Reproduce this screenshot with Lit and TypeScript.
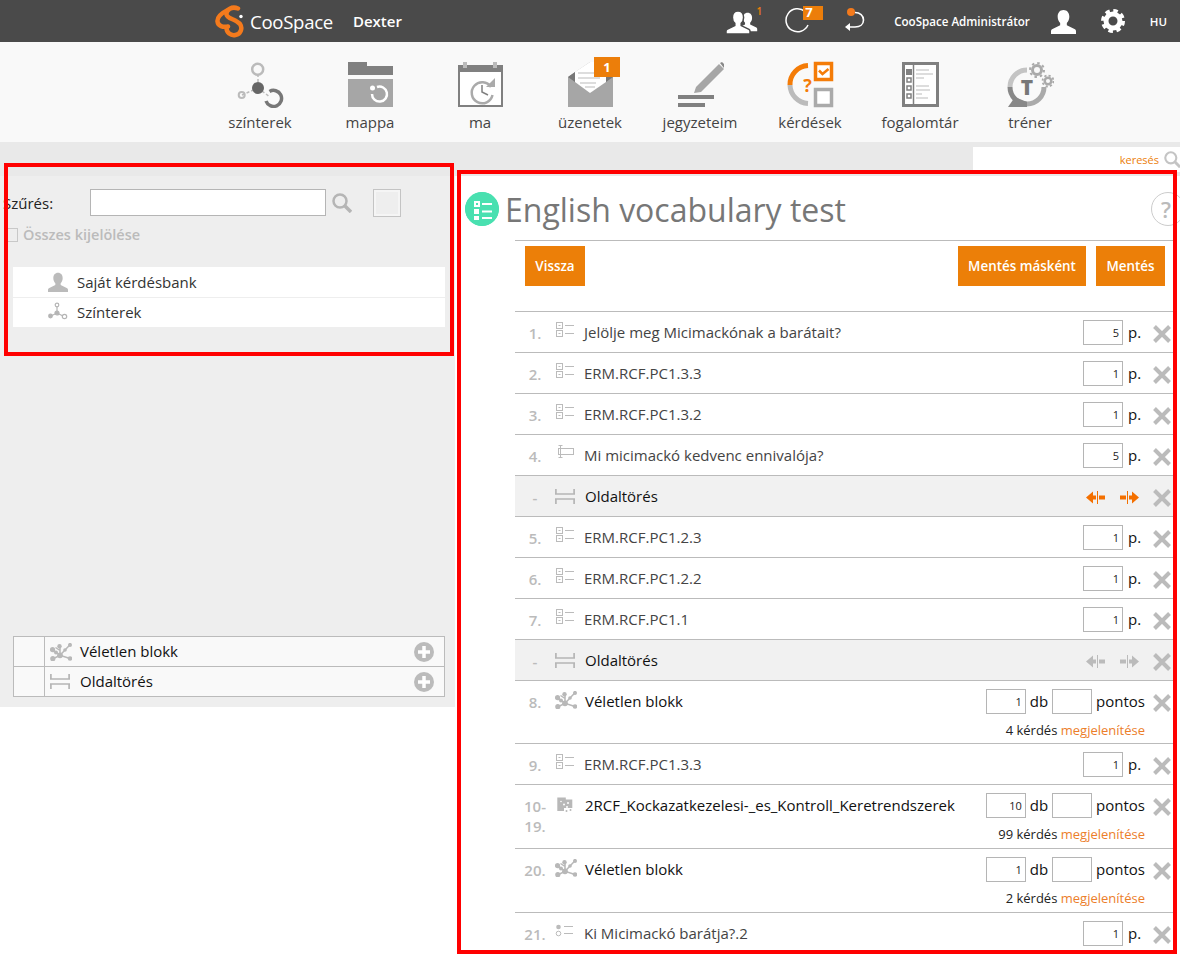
import { LitElement, html, css, svg } from 'lit';
import { customElement } from 'lit/decorators.js';

type Row = {
  no: string;
  kind: 'check' | 'text' | 'radio' | 'random' | 'folder' | 'break';
  title: string;
  points?: string;
  count?: string;
  note?: string;
  active?: boolean;
  short?: boolean;
};

const ROWS: Row[] = [
  { no: '1.', kind: 'check', title: 'Jelölje meg Micimackónak a barátait?', points: '5' },
  { no: '2.', kind: 'check', title: 'ERM.RCF.PC1.3.3', points: '1' },
  { no: '3.', kind: 'check', title: 'ERM.RCF.PC1.3.2', points: '1' },
  { no: '4.', kind: 'text', title: 'Mi micimackó kedvenc ennivalója?', points: '5' },
  { no: '-', kind: 'break', title: 'Oldaltörés', active: true },
  { no: '5.', kind: 'check', title: 'ERM.RCF.PC1.2.3', points: '1' },
  { no: '6.', kind: 'check', title: 'ERM.RCF.PC1.2.2', points: '1' },
  { no: '7.', kind: 'check', title: 'ERM.RCF.PC1.1', points: '1' },
  { no: '-', kind: 'break', title: 'Oldaltörés' },
  { no: '8.', kind: 'random', title: 'Véletlen blokk', count: '1', note: '4 kérdés', short: true },
  { no: '9.', kind: 'check', title: 'ERM.RCF.PC1.3.3', points: '1' },
  { no: '10-19.', kind: 'folder', title: '2RCF_Kockazatkezelesi-_es_Kontroll_Keretrendszerek', count: '10', note: '99 kérdés' },
  { no: '20.', kind: 'random', title: 'Véletlen blokk', count: '1', note: '2 kérdés' },
  { no: '21.', kind: 'radio', title: 'Ki Micimackó barátja?.2', points: '1' },
];

const PERSON = 'M12 1c-3.600 0-5.600 2.800-5.600 6.400 0 2.400 1 4.600 2.400 6v2.200L1 19.400C.3 19.800 0 20.500 0 21.300V24h24v-2.700c0-.8-.3-1.500-1-1.900l-7.800-3.800v-2.200c1.400-1.400 2.400-3.600 2.400-6C17.600 3.800 15.600 1 12 1z';

const iconCheck = html`<svg width="20" height="18" viewBox="0 0 20 18" fill="none" stroke="#bbb">
  <rect x="1.500" y="1.500" width="6" height="6"/><rect x="1.500" y="9.500" width="6" height="6"/>
  <path d="M3.500 4.500h2M3.500 12.500h2M10 4.500h9M10 12.500h9"/>
</svg>`;

const iconText = html`<svg width="20" height="18" viewBox="0 0 20 18" fill="none" stroke="#bbb">
  <rect x="3.500" y="4.500" width="15" height="6"/><path d="M5.500 1.500v12M3.500 1.500h4M3.500 13.500h4"/>
</svg>`;

const iconRadio = html`<svg width="20" height="18" viewBox="0 0 20 18" fill="none">
  <circle cx="3.500" cy="5" r="2.300" fill="#bbb"/><circle cx="3.500" cy="11.500" r="2.300" stroke="#bbb"/>
  <path d="M9 4.500h9M9 11.500h9" stroke="#bbb"/>
</svg>`;

const iconRandom = html`<svg class="random" width="22" height="18" viewBox="0 0 22 18" fill="#b8b8b8">
  <path d="M2.500 6.700L10 12.300 20 1.800M2.500 16L10 12.300 20 15.500M10 3v9M5.500 4.500l4.500 3" fill="none" stroke="#b8b8b8" stroke-width="1.500"/>
  <circle cx="2.500" cy="6.700" r="2.600"/><circle cx="2.800" cy="15.700" r="2.600"/><circle cx="6" cy="9.500" r="2"/>
  <circle cx="9.500" cy="3.200" r="2.200"/><circle cx="10" cy="12.300" r="2.900"/><circle cx="15" cy="7" r="1.800"/>
  <circle cx="20" cy="1.900" r="2"/><circle cx="20" cy="15.500" r="2.300"/>
</svg>`;

const iconFolder = html`<svg width="20" height="18" viewBox="0 -2.500 20 18">
  <path fill="#b8b8b8" d="M2.300 0h8.500v2h6.500v8.500H9v3H2.300z"/>
  <g fill="#b8b8b8"><circle cx="8" cy="12.500" r="1"/><circle cx="11.500" cy="13.500" r="1"/><circle cx="15.500" cy="12.500" r="1"/></g>
  <g fill="#fff"><circle cx="9" cy="7" r="1"/><circle cx="13" cy="5.500" r="1"/><circle cx="12" cy="9.500" r="1"/><circle cx="6" cy="4" r=".8"/></g>
</svg>`;

const iconBreak = html`<svg width="20" height="15" viewBox="0 0 20 15" fill="none" stroke="#b5b5b5" stroke-width="1.700">
  <path d="M.9 0v5M19.100 0v5M.9 10v5M19.100 10v5M0 5h20M0 10h20"/>
</svg>`;

const kindIcon = { check: iconCheck, text: iconText, radio: iconRadio, random: iconRandom, folder: iconFolder, break: iconBreak };

const iconCross = html`<svg class="cross" width="18" height="18" viewBox="0 0 18 18">
  <path d="M1.500 1.500l15 15M16.500 1.500l-15 15" stroke="#bbb" stroke-width="4" fill="none"/>
</svg>`;

const arrowLeft = (c: string) => html`<svg width="19" height="13" viewBox="0 0 19 13" fill=${c}>
  <path d="M0 6.500l7-6V4.500h3v4H7v4z"/><rect x="11" y="0" width="1" height="13"/><rect x="13" y="4.500" width="6" height="4"/>
</svg>`;

const arrowRight = (c: string) => html`<svg width="19" height="13" viewBox="0 0 19 13" fill=${c}>
  <rect x="0" y="4.500" width="6" height="4"/><rect x="7" y="0" width="1" height="13"/><path d="M19 6.500l-7-6V4.500H9v4h3v4z"/>
</svg>`;

const iconPlus = html`<svg width="20" height="20" viewBox="0 0 20 20">
  <circle cx="10" cy="10" r="10" fill="#bbb"/><path d="M10 4v12M4 10h12" stroke="#fff" stroke-width="3.500"/>
</svg>`;

const iconLens = (c: string, w: number) => html`<svg width=${w} height=${w} viewBox="0 0 20 20" fill="none" stroke=${c}>
  <circle cx="8" cy="8" r="6.500" stroke-width="2.500"/><path d="M13 13l6 6" stroke-width="3.500"/>
</svg>`;

const personShape = (fill: string) => svg`<path fill=${fill} d=${PERSON}/>`;

@customElement('app-root')
export class AppRoot extends LitElement {
  static styles = css`
    :host {
      display: block;
      position: relative;
      width: 1180px;
      height: 957px;
      overflow: hidden;
      background: #fff;
      font-family: 'Open Sans', 'Liberation Sans', sans-serif;
      font-size: 15px;
      color: #444;
    }
    svg { display: block; flex: none; }

    .top {
      display: flex;
      align-items: center;
      height: 42px;
      padding-left: 215px;
      background: #4a4a4a;
      color: #fff;
    }
    .brand { font-size: 18.600px; margin-left: 5px; letter-spacing: -0.300px; }
    .space { font-size: 15px; font-weight: 600; margin-left: 20px; }
    .tools { display: flex; align-items: center; margin-left: auto; height: 42px; }
    .tool { position: relative; }
    .users { margin-right: 23px; width: 36px; height: 30px; }
    .sup { position: absolute; top: -1px; right: 0; font-size: 10px; font-weight: 600; color: #ec7e0a; line-height: 12px; }
    .reload { width: 38px; height: 32px; margin-right: 22px; }
    .mini-badge {
      position: absolute;
      top: 1px;
      left: 18px;
      width: 20px;
      height: 14px;
      padding-left: 2px;
      box-sizing: border-box;
      background: #ec7e0a;
      font-size: 13px;
      font-weight: 700;
      line-height: 13px;
    }
    .admin { font-size: 11.600px; font-weight: 600; margin-left: 29px; }
    .lang { font-size: 11.500px; font-weight: 600; margin: 0 13px 0 25px; }

    .nav {
      display: flex;
      height: 100px;
      padding-left: 205px;
      box-sizing: border-box;
      background: #f9f9f9;
    }
    .nav-item {
      position: relative;
      display: flex;
      flex-direction: column;
      align-items: center;
      width: 110px;
      padding-top: 18px;
      font-size: 15px;
      line-height: 20px;
    }
    .nav-item span.label { margin-top: 4px; }
    .badge {
      position: absolute;
      top: 15px;
      left: 59px;
      width: 26px;
      height: 20px;
      background: #ec7e0a;
      color: #fff;
      font-size: 13px;
      font-weight: 700;
      line-height: 20px;
      text-align: center;
    }

    .strip {
      display: flex;
      justify-content: flex-end;
      height: 34px;
      background: #e9e9e9;
    }
    .search {
      display: flex;
      align-items: center;
      justify-content: flex-end;
      gap: 5px;
      width: 207px;
      height: 25px;
      margin-top: 5px;
      background: #fff;
      color: #ec7e0a;
      font-size: 11px;
    }
    .search svg { margin-right: -1px; }

    .body { display: flex; align-items: flex-start; }
    .side {
      display: flex;
      flex-direction: column;
      width: 455px;
      height: 531px;
      padding: 13px 0 10px;
      box-sizing: border-box;
      background: #eee;
      color: #333;
    }
    .filter { display: flex; align-items: flex-start; height: 28px; padding-left: 3px; color: #222; line-height: 28px; }
    .filter-label { width: 87px; }
    .filter input { width: 236px; height: 27px; box-sizing: border-box; border: 1px solid #b5b5b5; background: #fff; padding: 0; }
    .filter svg { margin: 4px 0 0 6px; }
    .square { width: 28px; height: 28px; margin-left: 21px; box-sizing: border-box; border: 1px solid #c4c4c4; outline: 2px solid #f5f5f5; outline-offset: -3px; }
    .all { display: flex; align-items: center; gap: 5px; height: 14px; margin: 11px 0 25px 4px; color: #bbb; font-weight: 600; font-size: 14.500px; }
    .all-text { margin-top: -2px; }
    .box { width: 14px; height: 14px; box-sizing: border-box; border: 1px solid #c8c8c8; }
    .tree { margin-left: 13px; width: 432px; background: #fff; }
    .tree-row { display: flex; align-items: center; height: 30px; box-sizing: border-box; padding-left: 35px; }
    .tree-row + .tree-row { border-top: 1px solid #eee; padding-bottom: 1px; }
    .tree-row span { margin-left: 9px; }
    .blocks {
      margin: auto 0 0 13px;
      width: 432px;
      box-sizing: border-box;
      border: 1px solid #bbb;
      background: #f9f9f9;
      color: #111;
    }
    .block { display: flex; align-items: center; height: 29px; }
    .block + .block { border-top: 1px solid #bbb; }
    .block-gap { width: 30px; height: 100%; border-right: 1px solid #bbb; margin-right: 5px; }
    .block-name { margin: 0 0 2px 10px; }
    .block .random + .block-name { margin-left: 8px; }
    .block svg:last-child { margin: 0 10px 0 auto; }

    .main { width: 725px; }
    .head { display: flex; align-items: center; height: 34px; padding: 16px 0 14px 10px; }
    .round { width: 34px; height: 34px; border-radius: 50%; background: #49e0b0; }
    .head h1 { margin: 2px 0 0 6px; font-size: 32px; font-weight: 400; color: #777; line-height: 34px; }
    .help {
      width: 32px;
      height: 32px;
      margin: 0 -5px 0 auto;
      border: 1px solid #ccc;
      border-radius: 50%;
      color: #bbb;
      font-size: 22px;
      font-weight: 600;
      line-height: 32px;
      text-align: center;
      text-indent: -4px;
    }
    .content { margin-left: 60px; width: 660px; }
    .toolbar {
      display: flex;
      gap: 10px;
      padding: 5px 10px 25px;
      border-top: 1px solid #bbb;
    }
    .btn {
      height: 40px;
      background: #ec7f08;
      color: #fff;
      font-size: 13.400px;
      font-weight: 600;
      line-height: 40px;
      text-align: center;
    }
    .btn.back { width: 60px; margin-right: auto; }
    .btn.save-as { width: 128px; }
    .btn.save { width: 69px; }

    .row {
      display: flex;
      align-items: flex-start;
      height: 41px;
      box-sizing: border-box;
      padding: 8px 4px 0 0;
      border-top: 1px solid #bbb;
    }
    .row.tall { height: 64px; }
    .row.short { height: 63px; }
    .row.break { background: #f1f1f1; }
    .no {
      flex: none;
      width: 30px;
      padding: 3px 5px 0;
      font-weight: 600;
      line-height: 20px;
      color: #bbb;
      text-align: center;
    }
    .kind { width: 29px; padding-top: 1px; flex: none; }
    .row.tall .kind { padding-top: 2px; }
    .row.break .kind { padding-top: 5px; }
    .title { margin-top: 2px; line-height: 20px; white-space: nowrap; }
    .title.strong { color: #111; margin-left: 1px; }
    .right { display: flex; flex-direction: column; align-items: flex-end; margin-left: auto; }
    .controls { display: flex; align-items: center; height: 25px; color: #111; }
    .field {
      width: 40px;
      height: 25px;
      box-sizing: border-box;
      padding: 0 3px;
      border: 1px solid #b5b5b5;
      background: #fff;
      color: #222;
      font: 11px 'Open Sans', sans-serif;
      text-align: right;
    }
    .field.gap { margin-left: 4px; }
    .unit { margin: -2px 0 0 4px; line-height: 20px; }
    .note { margin: 8px 26px 0 0; font-size: 13px; line-height: 16px; color: #222; }
    .note a { color: #ec7e2a; }
    .controls .cross { margin: 3px 0 0 8px; }
    .p-unit { width: 17px; margin-left: 5px; }
    .arrows { display: flex; align-items: center; gap: 15px; height: 25px; margin: 2px 6px 0 0; }

    .mark { position: absolute; border: 4px solid #f00; box-sizing: border-box; pointer-events: none; }
    .mark.left { left: 4px; top: 163px; width: 450px; height: 193px; }
    .mark.right { left: 457px; top: 170px; width: 720px; height: 784px; }
  `;

  renderTop() {
    return html`
      <header class="top">
        <svg width="30" height="33" viewBox="0 0 30 33" fill="none" stroke="#f47a1c" stroke-width="4.500" stroke-linecap="round">
          <path d="M12 5.500C7 8 2 11.500 2.500 16.500 3 21 8 22.500 13 21.500"/>
          <path d="M23 3.500C17 1 11 4.500 11.500 9.500 12 14 21 14 25 19c3 4.500.5 10-4.500 11-5 1-9-2.500-9-7"/>
          <circle cx="26" cy="11.500" r="1.700" fill="#fff" stroke="none"/>
        </svg>
        <span class="brand">CooSpace</span>
        <span class="space">Dexter</span>
        <div class="tools">
          <div class="tool users">
            <svg width="32" height="30" viewBox="0 0 32 30">
              <g transform="translate(12 6) scale(.8)">${personShape('#fff')}</g>
              <g transform="translate(0 4)">
                <path d=${PERSON} fill="#fff" stroke="#4a4a4a" stroke-width="1.500"/>
              </g>
            </svg>
            <span class="sup">1</span>
          </div>
          <div class="tool reload">
            <svg width="26" height="32" viewBox="0 0 26 32" fill="none">
              <path d="M20 7.500A11.500 11.500 0 1 0 23 21" stroke="#fff" stroke-width="1.500" transform="translate(0 -1)"/>
            </svg>
            <span class="mini-badge">7</span>
          </div>
          <svg width="20" height="30" viewBox="0 0 20 30" fill="none">
            <circle cx="6" cy="6" r="4" fill="#f47a1c"/>
            <path d="M10 6.500c5 0 8.500 3 8.500 7.500s-3.500 7-8.500 7H3" stroke="#fff" stroke-width="1.600"/>
            <path d="M0 21l5-4v8z" fill="#fff"/>
          </svg>
          <span class="admin">CooSpace Administrátor</span>
          <svg width="25" height="25" viewBox="0 0 24 24" style="margin-left:21px">${personShape('#fff')}</svg>
          <svg width="24" height="24" viewBox="0 0 24 24" style="margin-left:25px" fill="none" stroke="#fff">
            <circle cx="12" cy="12" r="7" stroke-width="5"/>
            <circle cx="12" cy="12" r="10.300" stroke-width="3.400" stroke-dasharray="4.500 3.590"/>
          </svg>
          <span class="lang">HU</span>
        </div>
      </header>
    `;
  }

  renderNav() {
    return html`
      <nav class="nav">
        <div class="nav-item">
          <svg width="48" height="48" viewBox="0 0 48 48" fill="none">
            <path d="M22 14v14M6 35l16-7M22 28l12 9" stroke="#bbb" stroke-width="1.500" stroke-dasharray="3 2"/>
            <circle cx="21.700" cy="9.300" r="5.500" stroke="#bbb" stroke-width="2.500"/>
            <circle cx="22" cy="28" r="6" fill="#666"/>
            <circle cx="5.700" cy="35" r="3" stroke="#bbb" stroke-width="2"/>
            <path d="M33.500 31.500A8 8 0 1 1 30 41" stroke="#777" stroke-width="3.500"/>
          </svg>
          <span class="label">színterek</span>
        </div>
        <div class="nav-item">
          <svg width="48" height="48" viewBox="0 0 48 48">
            <path fill="#808080" d="M2 2h19v4h26v9H2z"/>
            <rect x="2" y="19" width="45" height="28" fill="#a6a6a6"/>
            <path d="M29 27A7.500 7.500 0 1 1 24 34" fill="none" stroke="#fff" stroke-width="2.500" transform="translate(2 0)"/>
            <circle cx="26.500" cy="28" r="2.500" fill="#fff"/>
          </svg>
          <span class="label">mappa</span>
        </div>
        <div class="nav-item">
          <svg width="48" height="48" viewBox="0 0 48 48" fill="none">
            <rect x="3" y="6" width="43" height="40" fill="#fff" stroke="#808080" stroke-width="2"/>
            <rect x="2" y="5" width="45" height="7" fill="#808080"/>
            <rect x="7" y="2" width="4" height="6" fill="#bbb"/><rect x="37" y="2" width="4" height="6" fill="#bbb"/>
            <path d="M35 27a10.500 10.500 0 1 0 1.500 8" stroke="#aaa" stroke-width="2.500"/>
            <path d="M26 25v7l6 3" stroke="#808080" stroke-width="1.500"/>
            <path d="M30 27h9v-9z" fill="#aaa"/>
          </svg>
          <span class="label">ma</span>
        </div>
        <div class="nav-item">
          <svg width="48" height="48" viewBox="0 0 48 48">
            <path fill="#a6a6a6" d="M2 17L24 2l23 15v30H2z"/>
            <path fill="#777" d="M2 17l7-5v10zM47 17l-7-5v10z"/>
            <path fill="#fff" d="M9 12L24 2h16v20L24 33 9 22z"/>
            <path d="M12 13h18M12 18h22M14 23h16M19 27h10" stroke="#bbb" stroke-width="1"/>
          </svg>
          <span class="label">üzenetek</span>
          <span class="badge">1</span>
        </div>
        <div class="nav-item">
          <svg width="48" height="48" viewBox="0 0 48 48">
            <path fill="#a6a6a6" d="M18 33l2-6L43 4l5 5-23 23z"/>
            <path fill="#888" d="M44 3l2-1 3 3-1 3z"/>
            <rect x="2" y="35" width="36" height="4" fill="#808080"/>
            <rect x="2" y="43" width="27" height="4" fill="#808080"/>
          </svg>
          <span class="label">jegyzeteim</span>
        </div>
        <div class="nav-item">
          <svg width="48" height="48" viewBox="0 0 48 48" fill="none">
            <path d="M22 5.500A19 19 0 0 0 4 25" stroke="#f47c08" stroke-width="5"/>
            <path d="M4 25A19 19 0 0 0 22 43.500" stroke="#bbb" stroke-width="5"/>
            <text x="21.500" y="32" font-size="18" font-weight="700" fill="#f47c08" text-anchor="middle" font-family="Open Sans">?</text>
            <rect x="29.500" y="3.500" width="16" height="16" stroke="#f47c08" stroke-width="3.500" fill="#fff"/>
            <path d="M33 10.500l3.500 3.500 6-5" stroke="#f47c08" stroke-width="2.500"/>
            <rect x="29.500" y="29.500" width="16" height="16" stroke="#aaa" stroke-width="3.500" fill="#fff"/>
          </svg>
          <span class="label">kérdések</span>
        </div>
        <div class="nav-item">
          <svg width="48" height="48" viewBox="0 0 48 48" fill="none">
            <rect x="7.500" y="3.500" width="34" height="42" stroke="#808080" stroke-width="3" fill="#fff"/>
            <path d="M17.500 3v44" stroke="#808080" stroke-width="1.500"/>
            <g fill="#808080"><rect x="10" y="9" width="6" height="6"/></g>
            <g fill="none" stroke="#808080" stroke-width="1.500"><rect x="11" y="18" width="4" height="4"/><rect x="11" y="26" width="4" height="4"/><rect x="11" y="34" width="4" height="4"/></g>
            <path d="M20 10h13M20 14h17M20 18h8M20 26h13M20 30h14M20 34h6M20 38h12" stroke="#bbb" stroke-width="1"/>
          </svg>
          <span class="label">fogalomtár</span>
        </div>
        <div class="nav-item">
          <svg width="48" height="48" viewBox="0 0 48 48" fill="none">
            <path d="M21 10A17 17 0 0 0 4 27" stroke="#c4c4c4" stroke-width="5"/>
            <path d="M4 27A17 17 0 0 0 21 44" stroke="#888" stroke-width="5"/>
            <path d="M2 47l7-10 12 5v5z" fill="#888"/>
            <path d="M21 44A17 17 0 0 0 38 27" stroke="#aaa" stroke-width="5"/>
            <text x="21" y="35" font-size="21" font-weight="800" fill="#777" text-anchor="middle" font-family="Open Sans">T</text>
            <circle cx="31" cy="10" r="4.500" stroke="#aaa" stroke-width="3" fill="#f9f9f9"/>
            <circle cx="31" cy="10" r="7" stroke="#aaa" stroke-width="2" stroke-dasharray="2.500 3"/>
            <circle cx="42" cy="21" r="3.300" stroke="#aaa" stroke-width="2.500" fill="#f9f9f9"/>
            <circle cx="42" cy="21" r="5.500" stroke="#aaa" stroke-width="1.800" stroke-dasharray="2.200 2.100"/>
          </svg>
          <span class="label">tréner</span>
        </div>
      </nav>
    `;
  }

  renderSide() {
    return html`
      <aside class="side">
        <div class="filter">
          <span class="filter-label">Szűrés:</span>
          <input type="text" />
          ${iconLens('#b5b5b5', 20)}
          <div class="square"></div>
        </div>
        <div class="all"><span class="box"></span><span class="all-text">Összes kijelölése</span></div>
        <div class="tree">
          <div class="tree-row">
            <svg width="20" height="20" viewBox="0 0 24 24">${personShape('#bbb')}</svg>
            <span>Saját kérdésbank</span>
          </div>
          <div class="tree-row">
            <svg width="20" height="20" viewBox="0 0 20 20" fill="none" stroke="#b5b5b5" stroke-width="1.200">
              <path d="M9 4v7l-6 3M9 11l6 3"/><circle cx="9" cy="3" r="1.800"/><circle cx="9" cy="11" r="2" fill="#b5b5b5"/><circle cx="2.500" cy="14" r="1.800" fill="#b5b5b5"/><circle cx="16.500" cy="14.500" r="2.200"/>
            </svg>
            <span>Színterek</span>
          </div>
        </div>
        <div class="blocks">
          <div class="block">
            <div class="block-gap"></div>${iconRandom}
            <span class="block-name">Véletlen blokk</span>${iconPlus}
          </div>
          <div class="block">
            <div class="block-gap"></div>${iconBreak}
            <span class="block-name">Oldaltörés</span>${iconPlus}
          </div>
        </div>
      </aside>
    `;
  }

  renderRow(r: Row) {
    const strong = r.kind === 'random' || r.kind === 'folder' || r.kind === 'break';
    const cls = ['row', r.kind === 'break' ? 'break' : '', r.note ? 'tall' : '', r.short ? 'short' : ''].join(' ');
    let right;
    if (r.kind === 'break') {
      const c = r.active ? '#f47000' : '#bbb';
      right = html`<div class="controls">
        <div class="arrows">${arrowLeft(c)}${arrowRight(c)}</div>${iconCross}
      </div>`;
    } else if (r.note) {
      right = html`
        <div class="controls">
          <input class="field" .value=${r.count ?? ''} />
          <span class="unit">db</span>
          <input class="field gap" />
          <span class="unit">pontos</span>
          ${iconCross}
        </div>
        <div class="note">${r.note} <a>megjelenítése</a></div>
      `;
    } else {
      right = html`<div class="controls">
        <input class="field" .value=${r.points ?? ''} />
        <span class="unit p-unit">p.</span>${iconCross}
      </div>`;
    }
    return html`
      <div class=${cls}>
        <div class="no">${r.no}</div>
        <div class="kind">${kindIcon[r.kind]}</div>
        <div class="title ${strong ? 'strong' : ''}">${r.title}</div>
        <div class="right">${right}</div>
      </div>
    `;
  }

  render() {
    return html`
      ${this.renderTop()}
      ${this.renderNav()}
      <div class="strip">
        <div class="search">keresés ${iconLens('#c4c4c4', 17)}</div>
      </div>
      <div class="body">
        ${this.renderSide()}
        <main class="main">
          <div class="head">
            <svg class="round" viewBox="0 0 34 34">
              <circle cx="17" cy="17" r="17" fill="#49e0b0"/>
              <path fill="#fff" d="M9 9h6v6H9zm2 2v2h2v-2zM9 17h5v5H9zM9 24h5v4H9zM17 11h10v2H17zM17 18.500h10v2H17zM17 25h10v2H17z"/>
            </svg>
            <h1>English vocabulary test</h1>
            <div class="help">?</div>
          </div>
          <div class="content">
            <div class="toolbar">
              <div class="btn back">Vissza</div>
              <div class="btn save-as">Mentés másként</div>
              <div class="btn save">Mentés</div>
            </div>
            ${ROWS.map((r) => this.renderRow(r))}
          </div>
        </main>
      </div>
      <div class="mark left"></div>
      <div class="mark right"></div>
    `;
  }
}
